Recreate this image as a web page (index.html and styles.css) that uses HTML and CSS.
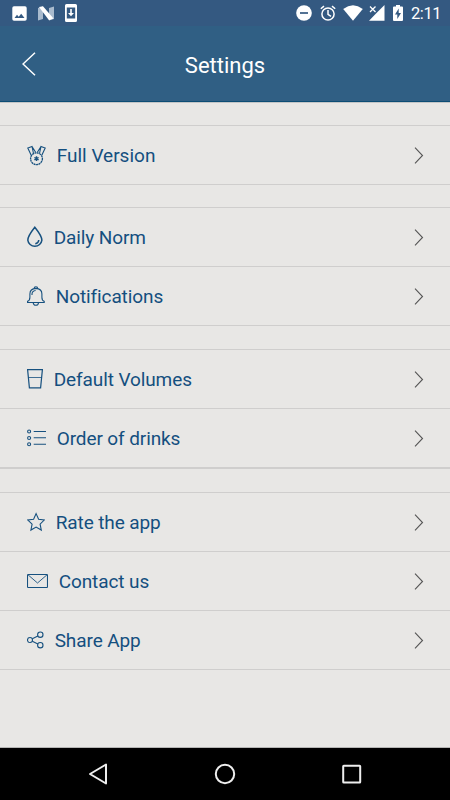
FILE: index.html
```html
<!DOCTYPE html>
<html lang="en">
<head>
<meta charset="utf-8">
<title>Settings</title>
<link rel="stylesheet" href="styles.css">
</head>
<body>
<div class="screen">
  <div class="status">
    <div class="status-left">
      <svg width="15" height="15" viewBox="0 0 15 15"><path fill="#fff" fill-rule="evenodd" d="M2 .3h11q1.700 0 1.700 1.700v11q0 1.700-1.700 1.700H2Q.3 14.700.3 13V2Q.3.300 2 .3zM2.500 12h10L9.200 7.700 6.700 10.800 5 8.700z"/></svg>
      <svg width="16" height="15" viewBox="0 0 16 15"><path fill="#a9bbce" d="M0 2l5-1.500V13L0 14.500zM11 2l5-1.500V13l-5 1.500z"/><path fill="#fff" d="M1 1L5 .3 15.500 12.500 11 14.300z"/></svg>
      <svg width="12" height="18" viewBox="0 0 12 18"><path fill="#fff" fill-rule="evenodd" d="M1.500 0h9Q12 0 12 1.500v15q0 1.500-1.500 1.500h-9Q0 18 0 16.500v-15Q0 0 1.500 0zM1.800 3.500v11h8.400v-11z"/><path fill="#fff" d="M5.200 5h1.600v4H9l-3 3.300L3 9h2.200z"/></svg>
    </div>
    <div class="status-right">
      <svg width="16" height="16" viewBox="0 0 16 16"><circle cx="8" cy="8" r="7.800" fill="#fff"/><path d="M4 8h8" stroke="#345981" stroke-width="1.700"/></svg>
      <svg class="alarm" width="16" height="16" viewBox="0 0 16 16" fill="none" stroke="#fff" stroke-width="1.500"><circle cx="8" cy="9" r="6.100"/><path d="M.8 3.800L4 1.100M15.200 3.800L12 1.100M8 5v4.300l3 2"/></svg>
      <svg class="wifi" width="20" height="16" viewBox="0 0 20 16"><path fill="#fff" d="M.2 4Q10-3.300 19.800 4L10 15.700z"/></svg>
      <svg class="cell" width="16" height="16" viewBox="0 0 16 16"><path fill="#fff" d="M15.500 0v15.700H0L7.500 8.100V8z"/><path d="M1 1.500l5.500 5.500M6.500 1.500L1 7" stroke="#fff" stroke-width="1.300"/></svg>
      <svg class="battery" width="10" height="16" viewBox="0 0 10 16"><path fill="#fff" fill-rule="evenodd" d="M3 0h4v1.500h2q1 0 1 1V15q0 1-1 1H1q-1 0-1-1V2.500q0-1 1-1h2zM5.700 3.500L2 9.500h2.300V14L8 8H5.700z"/></svg>
      <span class="time">2:11</span>
    </div>
  </div>
  <header class="header">
    <svg class="back" width="14" height="24" viewBox="0 0 14 24"><path d="M13 .7L1 12l12 11.300" fill="none" stroke="#fff" stroke-width="1.500"/></svg>
    <h1>Settings</h1>
  </header>
  <main class="content">
    <section class="group">
      <div class="row">
        <svg class="icon" width="19" height="22" viewBox="0 0 19 22"><path d="M6.500 9.500L5 2.500.8 4l3.400 7.200M12.500 9.500L14 2.500 18.200 4l-3.400 7.200M5 2.500l3.800 6M14 2.500l-3.800 6"/><circle cx="9.500" cy="14.700" r="5.900" stroke-width="1.300" stroke-dasharray="2 .5"/><path d="M9.500 12.300v4.800M7.400 13.500l4.200 2.400M11.600 13.500l-4.200 2.400" stroke-width="1.400"/></svg>
        <span class="label">Full Version</span>
        <svg class="chev" width="10" height="17" viewBox="0 0 10 17"><path d="M1 .7l7.500 7.800L1 16.300"/></svg>
      </div>
    </section>
    <section class="group">
      <div class="row">
        <svg class="icon" width="16" height="22" viewBox="0 0 16 22"><path stroke-width="1.500" d="M7.800 1.200Q14.900 10 14.900 14.200a7.100 6.900 0 0 1-14.100 0Q.8 10 7.800 1.200zM11.800 14q-.3 3.200-3.500 3.700"/></svg>
        <span class="label">Daily Norm</span>
        <svg class="chev" width="10" height="17" viewBox="0 0 10 17"><path d="M1 .7l7.500 7.800L1 16.300"/></svg>
      </div>
      <div class="row">
        <svg class="icon" width="18" height="22" viewBox="0 0 18 22"><path d="M.5 17.500v-1.200q2.400-.8 2.400-4V9q0-5.200 6-5.600 6 .4 6 5.600v3.300q0 3.200 2.300 4v1.200zM6.200 17.700q.2 2.600 2.700 2.600t2.600-2.600M7.100 3.500q0-1.800 1.800-1.800t1.800 1.800M5 10V9q.1-3 3.600-3.500"/></svg>
        <span class="label">Notifications</span>
        <svg class="chev" width="10" height="17" viewBox="0 0 10 17"><path d="M1 .7l7.500 7.800L1 16.300"/></svg>
      </div>
    </section>
    <section class="group thick">
      <div class="row">
        <svg class="icon" width="16" height="22" viewBox="0 0 16 22"><path stroke-width="1.200" d="M.6 1.600h14.800l-1.800 18.300H2.400z"/><path stroke-width=".8" d="M1.500 9.500h13"/></svg>
        <span class="label">Default Volumes</span>
        <svg class="chev" width="10" height="17" viewBox="0 0 10 17"><path d="M1 .7l7.500 7.800L1 16.300"/></svg>
      </div>
      <div class="row">
        <svg class="icon" width="19" height="20" viewBox="0 0 19 20"><circle cx="2.100" cy="3.500" r="1.500"/><circle cx="2.100" cy="10" r="1.500"/><circle cx="2.100" cy="16.300" r="1.500"/><path d="M6.700 3.500H19M6.700 9.800H19M6.700 16.300H19"/></svg>
        <span class="label">Order of drinks</span>
        <svg class="chev" width="10" height="17" viewBox="0 0 10 17"><path d="M1 .7l7.500 7.800L1 16.300"/></svg>
      </div>
    </section>
    <section class="group">
      <div class="row">
        <svg class="icon" width="18" height="20" viewBox="0 0 18 20"><path d="M9.100 1.600l2.500 5.600 5.800.7-4.300 4.200 1.200 6-5.200-3-5.200 3 1.200-6L.7 7.900l5.900-.7z"/></svg>
        <span class="label">Rate the app</span>
        <svg class="chev" width="10" height="17" viewBox="0 0 10 17"><path d="M1 .7l7.500 7.800L1 16.300"/></svg>
      </div>
      <div class="row">
        <svg class="icon" width="21" height="20" viewBox="0 0 21 20"><rect x=".5" y="3.500" width="20" height="13" rx=".7"/><path d="M1 3.800l9.500 8.200L20 3.800" stroke-width=".9"/></svg>
        <span class="label">Contact us</span>
        <svg class="chev" width="10" height="17" viewBox="0 0 10 17"><path d="M1 .7l7.500 7.800L1 16.300"/></svg>
      </div>
      <div class="row">
        <svg class="icon" width="17" height="20" viewBox="0 0 17 20"><circle cx="3" cy="10" r="2.500"/><circle cx="13.300" cy="4.700" r="2.700"/><circle cx="13.300" cy="15.200" r="2.700"/><path d="M5.300 8.800L10.900 6M5.300 11.200l5.600 2.800"/></svg>
        <span class="label">Share App</span>
        <svg class="chev" width="10" height="17" viewBox="0 0 10 17"><path d="M1 .7l7.500 7.800L1 16.300"/></svg>
      </div>
    </section>
  </main>
  <nav class="nav">
    <svg width="22" height="22" viewBox="0 0 22 22"><path d="M19 1.500v19L3 11z"/></svg>
    <svg width="22" height="22" viewBox="0 0 22 22"><circle cx="11" cy="11" r="9.200"/></svg>
    <svg width="22" height="22" viewBox="0 0 22 22"><rect x="2.200" y="2.700" width="17" height="16.800" rx=".6"/></svg>
  </nav>
</div>
</body>
</html>
```

FILE: styles.css
```css
* { box-sizing: border-box; }
body { margin: 0; font-family: Roboto, sans-serif; }
svg { display: block; flex: none; }
.screen {
  width: 450px;
  height: 800px;
  display: flex;
  flex-direction: column;
  background: #e8e7e5;
  overflow: hidden;
}
.status {
  height: 26px;
  flex: none;
  background: #345981;
  display: flex;
  justify-content: space-between;
  padding: 0 9px 0 12px;
}
.status-left, .status-right { display: flex; align-items: center; }
.status-left { gap: 11px; }
.status-right { gap: 8px; }
.wifi { margin-left: -1px; }
.cell { margin-left: -2px; }
.time {
  color: #fff;
  font-size: 16.500px;
  line-height: 26px;
  width: 30px;
  white-space: nowrap;
  letter-spacing: -.4px;
  padding-top: 2px;
}
.header {
  height: 76px;
  flex: none;
  background: #305f84;
  border-bottom: 1px solid #0c4d75;
  display: grid;
  grid-template-columns: 56px 1fr 56px;
  align-items: center;
}
.back { margin: 1px 0 0 21.5px; }
h1 {
  margin: 0;
  padding-top: 4px;
  color: #fff;
  font-size: 22px;
  line-height: 28px;
  font-weight: 400;
  text-align: center;
}
.content {
  flex: 1;
  padding-top: 22px;
  border-top: 1px solid #c4c6c7;
  border-bottom: 1px solid #b5b5b4;
}
.group { border-top: 1px solid #cfcecd; margin-bottom: 22px; }
.group + .group { margin-bottom: 23px; }
.row {
  height: 59px;
  display: flex;
  align-items: center;
  padding: 0 26px 0 27px;
  border-bottom: 1px solid #cfcecd;
}
.thick .row:last-child { height: 60px; border-bottom-width: 2px; }
.icon { fill: none; stroke: #17517f; stroke-width: 1.1; }
.label {
  flex: 1;
  margin-left: 10.700px;
  padding-top: 2px;
  color: #144f7f;
  font-size: 19px;
  line-height: 24px;
  letter-spacing: -.1px;
  white-space: nowrap;
}
.group:first-child .label { padding-top: 1px; letter-spacing: 0; }
.chev { margin-top: 1px; fill: none; stroke: #555; stroke-width: 1.1; }
.nav {
  height: 52px;
  flex: none;
  background: #000;
  display: flex;
  justify-content: space-between;
  align-items: center;
  padding: 0 87px;
}
.nav svg { fill: none; stroke: #eee; stroke-width: 2; stroke-linejoin: round; }
```
